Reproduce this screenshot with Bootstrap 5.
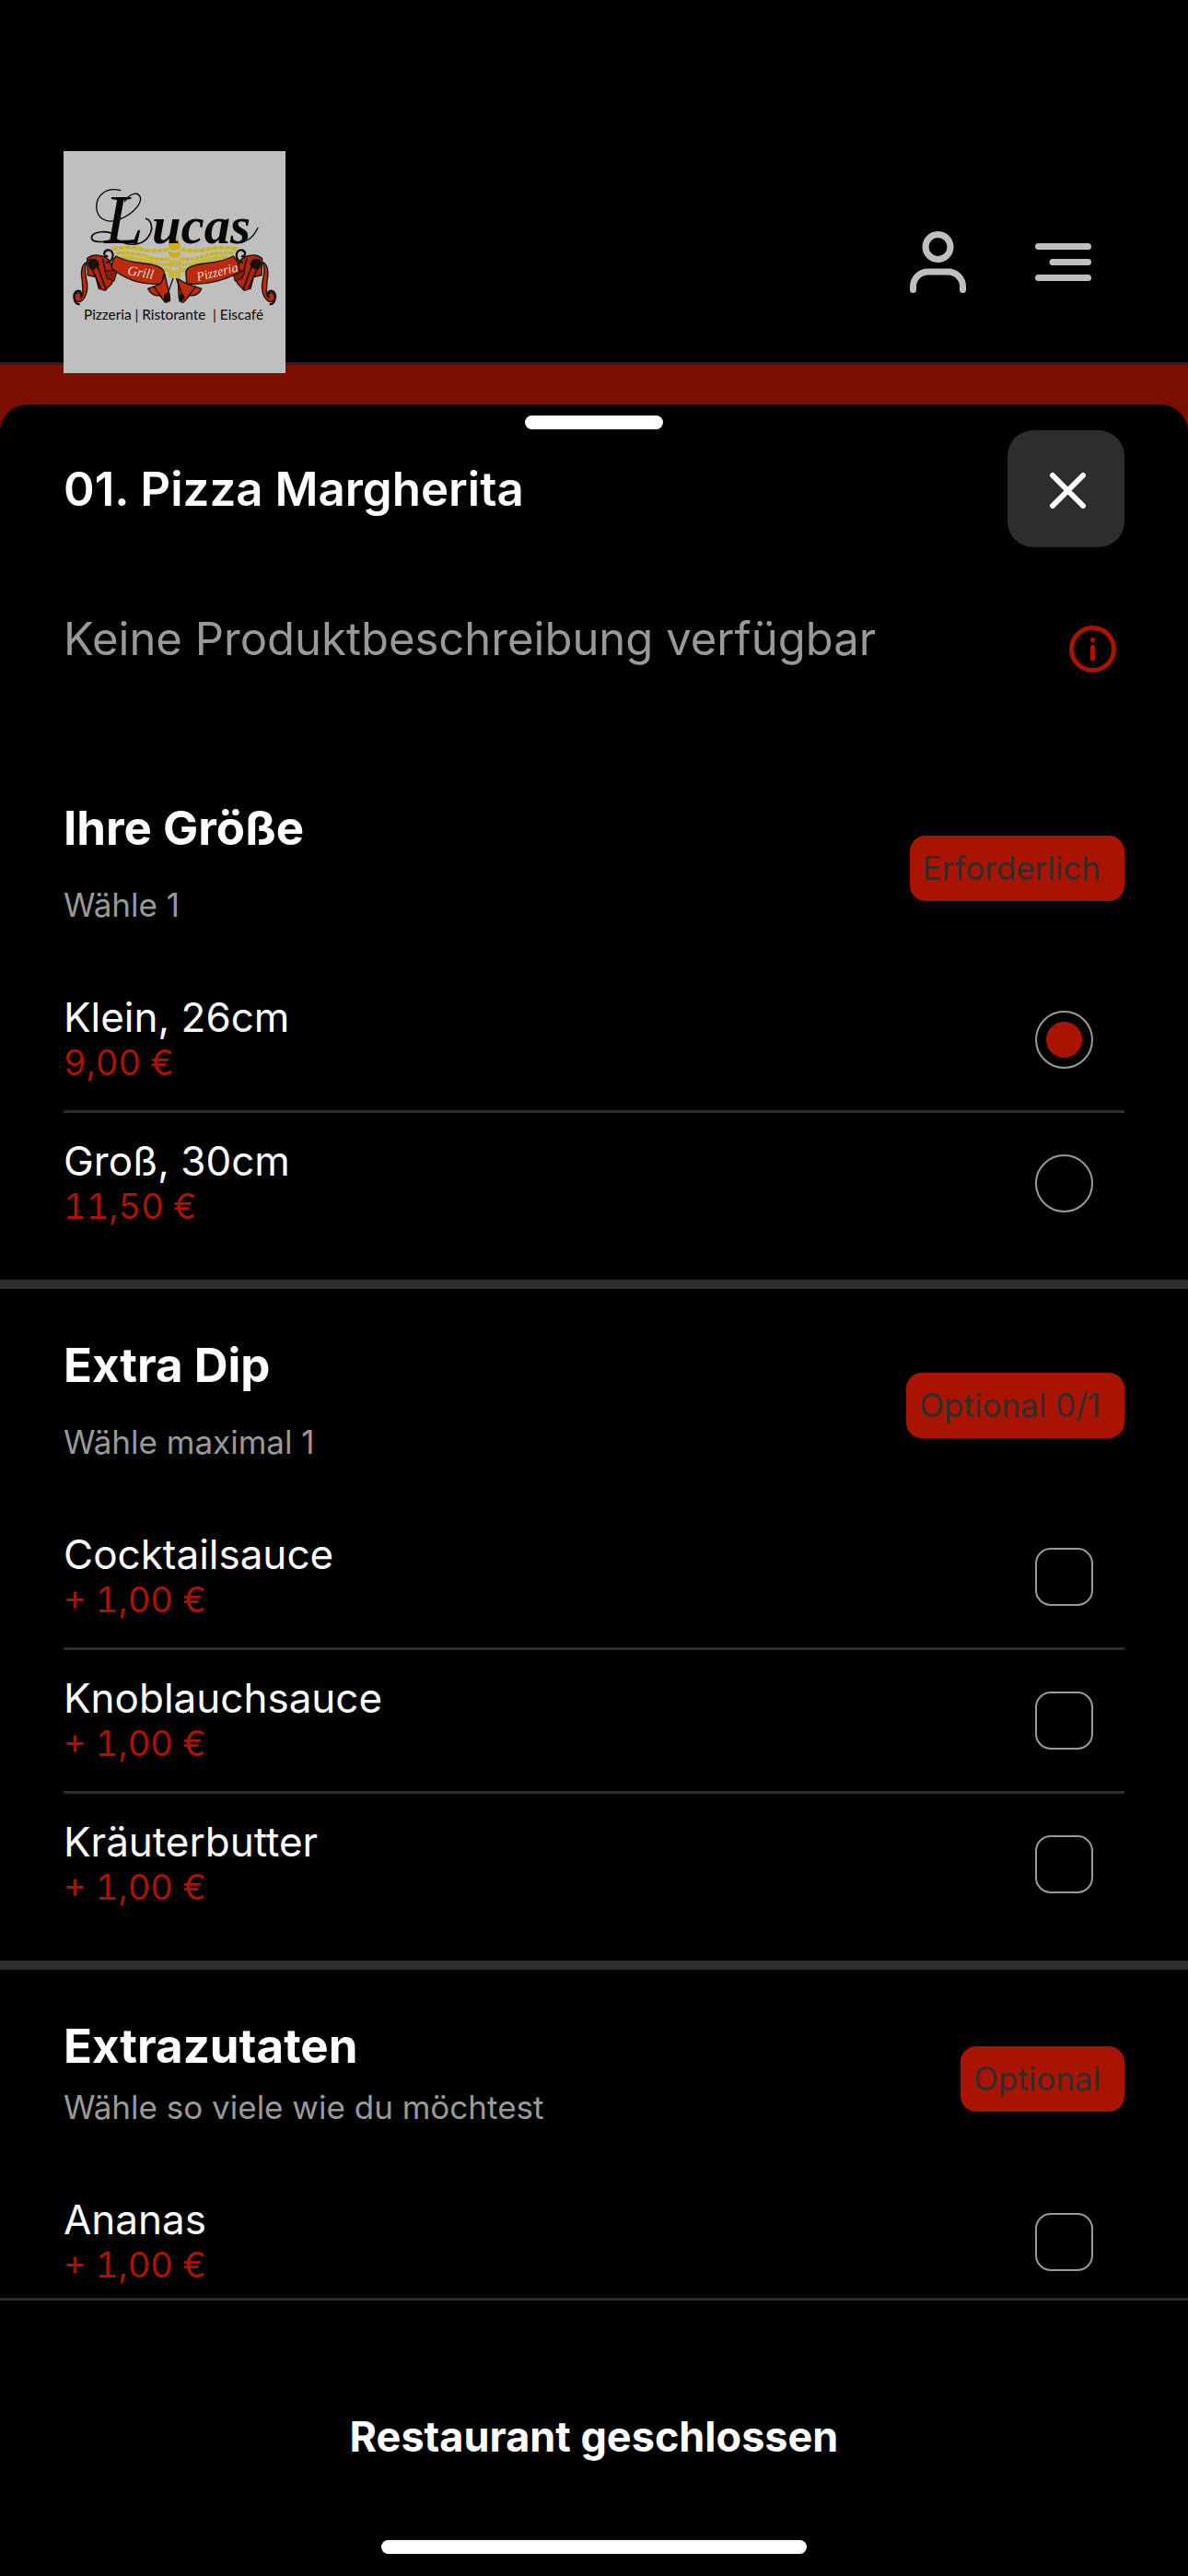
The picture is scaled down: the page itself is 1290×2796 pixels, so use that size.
<!DOCTYPE html>
<html lang="de">
<head>
<meta charset="utf-8">
<meta name="viewport" content="width=device-width, initial-scale=1">
<title>Lucas – 01. Pizza Margherita</title>
<link href="https://cdn.jsdelivr.net/npm/bootstrap@5.3.0/dist/css/bootstrap.min.css" rel="stylesheet">
<style>
  :root { --brand: #a91400; --line: #2d2d2d; --muted: #999; --gutter: 69px; }
  body { background: #000; color: #fff; font-family: Inter, "Liberation Sans", sans-serif; }
  .gutter { padding-left: var(--gutter); padding-right: var(--gutter); }
  .site-head { padding-top: 164px; border-bottom: 3px solid #222; }
  .logo { width: 241px; height: 241px; margin-bottom: -12px; }
  .head-icons { gap: 75px; padding-right: 36px; margin-top: 12px; }
  .icon-btn { background: none; border: 0; padding: 0; color: #bfbfbf; line-height: 0; }
  .stage { background: #7a0f00; padding-top: 43px; min-height: 0; }
  .sheet { background: #000; border-radius: 30px 30px 0 0; padding-top: 12px; min-height: 0; }
  .grabber { width: 150px; height: 15px; border-radius: 8px; margin-bottom: 1px; }
  .title-text { font-size: 51px; line-height: 60px; }
  .close-btn { width: 127px; height: 127px; border-radius: 28px; background: var(--line); color: #fff; border: 0; }
  .scroller { overflow-y: auto; scrollbar-width: none; min-height: 0; }
  .scroller::-webkit-scrollbar { display: none; }
  .descr { padding-top: 70px; padding-bottom: 72px; }
  .descr p { color: var(--muted); font-size: 49px; line-height: 60px; padding-bottom: 20px; }
  .descr .icon-btn { color: var(--brand); margin-right: 9px; }
  .group { padding-top: 53px; padding-bottom: 28px; border-bottom: 10px solid var(--line); }
  .group-head { margin-bottom: 36px; }
  .group-text { display: grid; gap: 31px; padding-bottom: 12px; }
  .group-text.tight { gap: 14px; }
  .sub-text { color: var(--muted); font-size: 35px; line-height: 44px; }
  .tag { background: var(--brand); color: var(--line); font-size: 35px; line-height: 71px; border-radius: 17px; padding: 0 26px 0 14px; }
  .choice { padding-right: 34px; }
  .choice + .choice { border-top: 3px solid var(--line); }
  .choice label { padding: 25px 0 29px; }
  .choice-name { font-size: 44px; line-height: 54px; }
  .choice-price { font-size: 38px; line-height: 45px; color: var(--brand); font-variant-numeric: tabular-nums; }
  .form-check-input.pick { width: 63px; height: 63px; margin: 0; background-color: transparent; border: 2px solid var(--muted); }
  .form-check-input.pick[type=checkbox] { border-radius: 17px; }
  .form-check-input.pick:checked { border-color: var(--muted); background-image: radial-gradient(circle closest-side, var(--brand) 19px, transparent 20px); }
  .foot { border-top: 3px solid var(--line); padding: 121px 0 24px; background: #000; }
  .order-btn { font-size: 45px; line-height: 54px; background: none; border: 0; color: #fff; padding: 0; margin-bottom: 85px; }
  .home-bar { width: 462px; height: 15px; border-radius: 8px; }
</style>
</head>
<body class="d-flex flex-column vh-100 overflow-hidden">
<header class="site-head gutter d-flex align-items-center justify-content-between">
  <a href="#" class="logo d-block position-relative" aria-label="Lucas">
    <svg class="d-block" width="241" height="241" viewBox="57 42 723 723">
      <rect x="57" y="42" width="723" height="723" fill="#bfbfbf"/>
      <!-- wings -->
      <g fill="none" stroke="#cdb51c">
        <path d="M216 360Q265 352 310 362T400 362M622 360Q573 352 528 362T438 362" stroke-width="12" stroke-dasharray="18 3"/>
        <path d="M228 374Q290 372 330 386T404 392M610 374Q548 372 508 386T434 392" stroke-width="11" stroke-dasharray="14 2"/>
        <path d="M245 388Q300 390 340 403T404 408M593 388Q538 390 498 403T434 408" stroke-width="11" stroke-dasharray="9 2"/>
        <path d="M270 401Q325 406 355 419T406 424M568 401Q513 406 483 419T432 424" stroke-width="11" stroke-dasharray="7 2"/>
        <path d="M330 418Q370 428 408 434M508 418Q468 428 430 434" stroke-width="8" stroke-dasharray="6 2"/>
        <path d="M399 442H440" stroke-width="24" stroke-dasharray="8 2"/>
        <path d="M404 408H435" stroke-width="22" stroke-dasharray="6 2"/>
      </g>
      <path d="M417 308Q408 330 400 343Q396 366 419 366Q442 364 437 344Q428 332 428 322L423 330ZM399 366Q418 380 439 366Q440 390 419 391Q399 390 399 366Z" fill="#cfae12"/>
      <!-- ribbon, mirrored for the right half -->
      <defs>
        <g id="ribbon">
          <path d="M132 405C118 435 138 462 134 492C130 522 112 540 98 530C88 522 92 500 106 504C120 504 118 518 110 520C126 512 118 486 118 466C112 436 116 408 134 404Z" fill="#bd2a0c" stroke="#16100c" stroke-width="4"/>
          <path d="M110 540C92 544 84 508 100 498C112 494 122 508 112 518" fill="none" stroke="#111" stroke-width="7"/>
          <path d="M134 392C152 374 186 380 204 396L226 440L214 474L192 496L172 490L162 452L136 446Z" fill="#b3260b" stroke="#16100c" stroke-width="4"/>
          <path d="M140 396Q168 384 174 412Q164 430 148 428Q132 418 140 396Z" fill="#1a0c08"/>
          <path d="M150 426L178 488M166 412L196 494M184 392L200 456L222 434" fill="none" stroke="#16100c" stroke-width="5"/>
          <path d="M196 404C222 404 226 362 200 364C184 370 188 388 202 384" fill="none" stroke="#111" stroke-width="7"/>
          <path d="M190 432L232 430L222 466L200 456Z" fill="#8b1c08" stroke="#16100c" stroke-width="3"/>
        </g>
      </defs>
      <use href="#ribbon"/>
      <use href="#ribbon" transform="translate(838 0) scale(-1 1)"/>
      <g fill="#bd2a0c" stroke="#16100c" stroke-width="4">
        <path d="M228 384C284 414 320 400 366 418Q388 428 384 444L376 474C330 478 270 470 214 424Q212 400 228 384Z"/>
        <path d="M610 384C554 414 518 400 472 418Q452 428 456 444L458 474C508 478 568 470 630 436Q630 400 610 384Z"/>
        <path d="M332 490L374 474Q386 452 386 440L402 508Q408 536 388 534L370 512Q344 516 332 490Z"/>
        <path d="M506 490L458 474L430 458L432 508Q432 536 448 534L468 512Q496 516 506 490Z"/>
        <path d="M414 456L396 508L404 532M424 456L442 508L434 532M350 482L378 520M488 482L460 520" fill="none"/>
      </g>
      <path d="M384 510Q402 496 404 520Q396 538 384 530ZM434 510Q450 500 452 520Q442 538 434 530Z" fill="#1a0c08"/>
      <g font-family="'Liberation Serif',serif" font-style="italic">
        <text x="264" y="444" font-size="44" fill="#ddd" transform="rotate(10 264 444)">Grill</text>
        <text x="494" y="466" font-size="42" fill="#ddd" transform="rotate(-14 494 466)">Pizzeria</text>
        <text y="341" fill="#050505" font-weight="bold"><tspan x="190" font-size="230" font-weight="normal">L</tspan><tspan x="345" font-size="170">ucas</tspan></text>
      </g>
      <g fill="none" stroke="#050505" stroke-linecap="round">
        <path d="M242 170C196 158 164 186 164 224C166 262 196 276 226 268C272 256 306 222 308 198C306 172 274 176 256 206" stroke-width="4"/>
        <path d="M230 318C200 296 150 304 148 324C152 344 200 340 228 324" stroke-width="5"/>
        <path d="M228 328C270 356 330 354 344 296Q344 268 326 262" stroke-width="5"/>
        <path d="M650 334Q674 326 690 292" stroke-width="4"/>
      </g>
      <text x="123" y="591" font-family="Lato,sans-serif" font-size="46" fill="#080808" xml:space="preserve">Pizzeria | Ristorante  | Eiscafé</text>
    </svg>
  </a>
  <div class="head-icons d-flex align-items-center">
    <button class="icon-btn" type="button" aria-label="Konto">
      <svg width="61" height="67" viewBox="0 0 61 67" fill="none" stroke="currentColor" stroke-width="7" stroke-linecap="round"><circle cx="30.500" cy="17" r="13.500"/><path d="M3.500 63.500V60A16 16 0 0 1 19.500 44H41.500A16 16 0 0 1 57.500 60V63.500"/></svg>
    </button>
    <button class="icon-btn" type="button" aria-label="Menü">
      <svg width="61" height="41" viewBox="0 0 61 41" fill="none" stroke="currentColor" stroke-width="7" stroke-linecap="round"><path d="M3.500 3.500H57.500M19 20.500H57.500M3.500 37.500H57.500"/></svg>
    </button>
  </div>
</header>

<main class="stage flex-fill d-flex flex-column">
  <section class="sheet flex-fill d-flex flex-column" role="dialog" aria-labelledby="dish">
    <div class="grabber bg-white mx-auto flex-shrink-0"></div>
    <div class="gutter d-flex align-items-center justify-content-between">
      <h1 id="dish" class="title-text fw-semibold mb-0">01. Pizza Margherita</h1>
      <button class="close-btn d-flex align-items-center justify-content-center p-0" type="button" aria-label="Schließen">
        <svg width="43" height="43" viewBox="0 0 43 43" fill="none" stroke="currentColor" stroke-width="6" stroke-linecap="round"><path d="M7 7L40 40M40 7L7 40"/></svg>
      </button>
    </div>
    <div class="scroller flex-fill">
      <div class="descr gutter d-flex align-items-center justify-content-between">
        <p class="mb-0">Keine Produktbeschreibung verfügbar</p>
        <button class="icon-btn" type="button" aria-label="Produktinformationen">
          <svg width="51" height="51" viewBox="0 0 51 51" fill="none" stroke="currentColor" stroke-width="5" stroke-linecap="round"><circle cx="25.500" cy="25.500" r="23"/><path d="M25.500 23.500V36"/><circle cx="25.500" cy="15.500" r="2.600" fill="currentColor" stroke="none"/></svg>
        </button>
      </div>

      <section class="group gutter">
        <div class="group-head d-flex align-items-center justify-content-between">
          <div class="group-text"><h2 class="title-text fw-bold mb-0">Ihre Größe</h2><p class="sub-text mb-0">Wähle 1</p></div>
          <span class="tag">Erforderlich</span>
        </div>
        <div class="choice d-flex align-items-center">
          <label class="flex-fill" for="s1"><span class="choice-name d-block">Klein, 26cm</span><span class="choice-price d-block">9,00 €</span></label>
          <input class="form-check-input pick" type="radio" name="size" id="s1" checked>
        </div>
        <div class="choice d-flex align-items-center">
          <label class="flex-fill" for="s2"><span class="choice-name d-block">Groß, 30cm</span><span class="choice-price d-block">11,50 €</span></label>
          <input class="form-check-input pick" type="radio" name="size" id="s2">
        </div>
      </section>

      <section class="group gutter">
        <div class="group-head d-flex align-items-center justify-content-between">
          <div class="group-text"><h2 class="title-text fw-bold mb-0">Extra Dip</h2><p class="sub-text mb-0">Wähle maximal 1</p></div>
          <span class="tag">Optional 0/1</span>
        </div>
        <div class="choice d-flex align-items-center">
          <label class="flex-fill" for="d1"><span class="choice-name d-block">Cocktailsauce</span><span class="choice-price d-block">+ 1,00 €</span></label>
          <input class="form-check-input pick" type="checkbox" id="d1">
        </div>
        <div class="choice d-flex align-items-center">
          <label class="flex-fill" for="d2"><span class="choice-name d-block">Knoblauchsauce</span><span class="choice-price d-block">+ 1,00 €</span></label>
          <input class="form-check-input pick" type="checkbox" id="d2">
        </div>
        <div class="choice d-flex align-items-center">
          <label class="flex-fill" for="d3"><span class="choice-name d-block">Kräuterbutter</span><span class="choice-price d-block">+ 1,00 €</span></label>
          <input class="form-check-input pick" type="checkbox" id="d3">
        </div>
      </section>

      <section class="group gutter border-bottom-0 pb-0">
        <div class="group-head d-flex align-items-center justify-content-between">
          <div class="group-text tight"><h2 class="title-text fw-bold mb-0">Extrazutaten</h2><p class="sub-text mb-0">Wähle so viele wie du möchtest</p></div>
          <span class="tag">Optional</span>
        </div>
        <div class="choice d-flex align-items-center">
          <label class="flex-fill" for="e1"><span class="choice-name d-block">Ananas</span><span class="choice-price d-block">+ 1,00 €</span></label>
          <input class="form-check-input pick" type="checkbox" id="e1">
        </div>
      </section>
    </div>
  </section>
</main>

<footer class="foot d-flex flex-column align-items-center">
  <button class="order-btn fw-bold" type="button">Restaurant geschlossen</button>
  <div class="home-bar bg-white"></div>
</footer>
<script src="https://cdn.jsdelivr.net/npm/bootstrap@5.3.0/dist/js/bootstrap.bundle.min.js"></script>
</body>
</html>
